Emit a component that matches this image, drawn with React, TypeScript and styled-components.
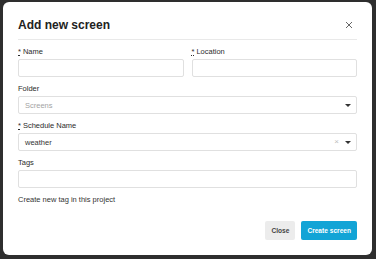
import React from "react"
import styled, { createGlobalStyle } from "styled-components"

const GlobalStyle = createGlobalStyle`
  html, body {
    margin: 0;
    padding: 0;
    background: #2e2e2e;
    font-family: "Liberation Sans", Arial, sans-serif;
  }
  * {
    box-sizing: border-box;
  }
`

const Backdrop = styled.div`
  width: 376px;
  height: 259px;
  padding: 2px 4px 4px 3px;
  background: #2e2e2e;
`

const Modal = styled.div`
  width: 369px;
  height: 253px;
  background: #fff;
  border-radius: 6px;
  padding: 15px 15px 14px 15px;
  display: flex;
  flex-direction: column;
`

const Header = styled.div`
  display: flex;
  align-items: center;
  justify-content: space-between;
  padding-bottom: 6px;
  border-bottom: 1px solid #e9e9e9;
`

const Title = styled.h2`
  margin: 0;
  font-size: 12px;
  line-height: 16px;
  font-weight: 700;
  color: #222;
`

const CloseIcon = styled.button`
  border: 0;
  background: none;
  padding: 0;
  margin-right: 4px;
  width: 8px;
  height: 8px;
  display: flex;
  cursor: pointer;
`

const Body = styled.div`
  display: flex;
  flex-direction: column;
  gap: 7px;
  padding-top: 7px;
`

const Row = styled.div`
  display: grid;
  grid-template-columns: 1fr 1fr;
  gap: 8px;
`

const Field = styled.div`
  display: flex;
  flex-direction: column;
  gap: 2px;
`

const Label = styled.label`
  font-size: 7.5px;
  line-height: 10px;
  color: #2b2b2b;
`

const Required = styled.abbr`
  text-decoration: underline dotted;
  margin-right: 2px;
`

const Input = styled.div`
  height: 18px;
  border: 1px solid #e0e0e0;
  border-radius: 2px;
  background: #fff;
`

const Select = styled(Input)`
  display: flex;
  align-items: center;
  padding: 0 5px 0 6px;
  gap: 6px;
`

const SelectValue = styled.span<{ $placeholder?: boolean }>`
  flex: 1;
  font-size: 7.5px;
  color: ${p => (p.$placeholder ? "#a3a3a3" : "#333")};
`

const Clear = styled.span`
  font-size: 8px;
  line-height: 8px;
  color: #bdbdbd;
`

const Arrow = styled.span`
  width: 0;
  height: 0;
  border-left: 3px solid transparent;
  border-right: 3px solid transparent;
  border-top: 3px solid #333;
`

const Hint = styled.div`
  font-size: 7.5px;
  line-height: 10px;
  color: #333;
`

const Footer = styled.div`
  display: flex;
  justify-content: flex-end;
  gap: 6px;
  margin-top: 16px;
`

const Button = styled.button<{ $primary?: boolean }>`
  height: 19px;
  border: 0;
  border-radius: 2px;
  padding: 0 6px;
  font-family: inherit;
  font-size: 6.6px;
  font-weight: 700;
  background: ${p => (p.$primary ? "#12a4d6" : "#ececec")};
  color: ${p => (p.$primary ? "#fff" : "#444")};
  cursor: pointer;
`

export default () => {
  return (
    <>
      <GlobalStyle />
      <Backdrop>
        <Modal>
          <Header>
            <Title>Add new screen</Title>
            <CloseIcon aria-label="Close">
              <svg width="8" height="8" viewBox="0 0 8 8">
                <path d="M1 1L7 7M7 1L1 7" stroke="#666" strokeWidth="1" />
              </svg>
            </CloseIcon>
          </Header>
          <Body>
            <Row>
              <Field>
                <Label>
                  <Required title="required">*</Required>Name
                </Label>
                <Input />
              </Field>
              <Field>
                <Label>
                  <Required title="required">*</Required>Location
                </Label>
                <Input />
              </Field>
            </Row>
            <Field>
              <Label>Folder</Label>
              <Select>
                <SelectValue $placeholder>Screens</SelectValue>
                <Arrow />
              </Select>
            </Field>
            <Field>
              <Label>
                <Required title="required">*</Required>Schedule Name
              </Label>
              <Select>
                <SelectValue>weather</SelectValue>
                <Clear>×</Clear>
                <Arrow />
              </Select>
            </Field>
            <Field>
              <Label>Tags</Label>
              <Input />
            </Field>
            <Hint>Create new tag in this project</Hint>
          </Body>
          <Footer>
            <Button>Close</Button>
            <Button $primary>Create screen</Button>
          </Footer>
        </Modal>
      </Backdrop>
    </>
  )
}
